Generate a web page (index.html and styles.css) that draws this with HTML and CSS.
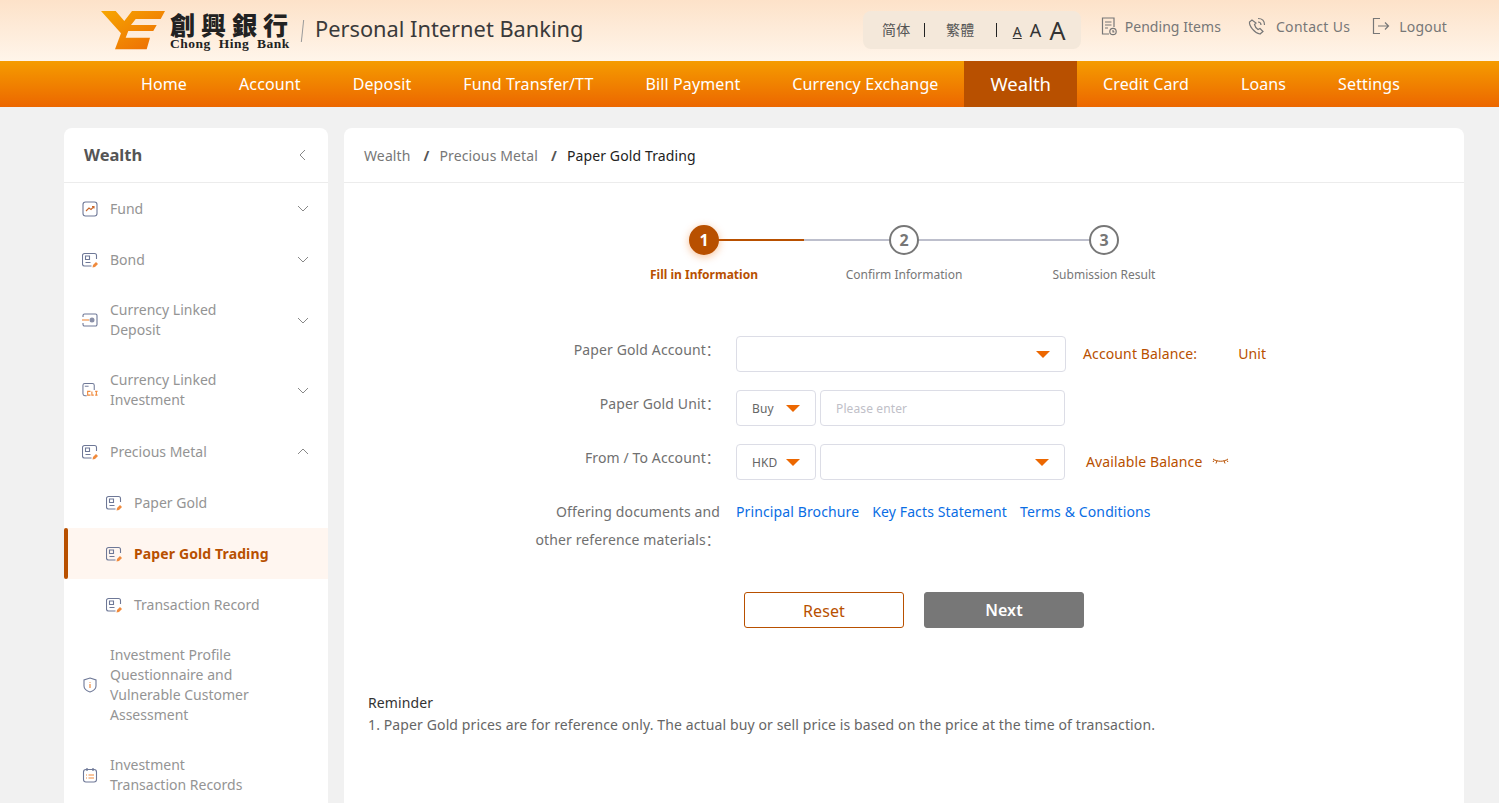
FILE: index.html
```html
<!doctype html>
<html>
<head>
    <meta charset="utf-8">
    <title>Personal Internet Banking</title>
    <link rel="stylesheet" href="styles.css">
</head>
<body>

<svg class="defs" width="0" height="0">
    <symbol id="i-doc" viewBox="0 0 16 16">
        <path d="M14.500 7V3.500a2 2 0 0 0-2-2h-10a2 2 0 0 0-2 2v8.500a2 2 0 0 0 2 2h7" fill="none" stroke="#6e7897" stroke-width="1.1"/>
        <path d="M3.500 4h4v3.500h-4zM3.500 10.500h5" fill="none" stroke="#6e7897" stroke-width="1.1"/>
        <path d="M10.500 15.500l.5-2.500 3-3 2 2-3 3z" fill="#f08a3c"/>
    </symbol>
</svg>

<div class="top">
    <div class="logo">
        <svg class="logo-mark" width="66" height="40" viewBox="0 0 66 40">
            <defs>
                <linearGradient id="lg" x1="0" y1="0" x2="1" y2="1">
                    <stop offset="0" stop-color="#f7a600"/>
                    <stop offset="1" stop-color="#ec6a05"/>
                </linearGradient>
            </defs>
            <path d="M1 0h14.700l8.600 10L32 0h33l-4.300 8h-25L31 14h25.700l-3.400 6h-25l-2.600 6.700H50l-3.300 11.600H15l6-16z" fill="url(#lg)"/>
        </svg>
        <div class="logo-name">
            <b>創興銀行</b>
            <span>Chong Hing Bank</span>
        </div>
        <i class="logo-line"></i>
        <div class="logo-title">Personal Internet Banking</div>
    </div>
    <div class="tools">
        <div class="lang">
            <span class="lang-item">简体</span>
            <span class="lang-item">繁體</span>
            <span class="size size-s">A</span>
            <span class="size size-m">A</span>
            <span class="size size-l">A</span>
        </div>
        <a class="tool tool-a">
            <svg width="16" height="19" viewBox="0 0 16 19" fill="none" stroke="#777" stroke-width="1.2"><path d="M8 17H1.500V1h11.500v9"/><path d="M4 5h6.500M4 8h6.500M4 11h3"/><circle cx="12" cy="14.500" r="3.200"/><path d="M12 13v1.800h1.400"/></svg>
            Pending Items
        </a>
        <a class="tool tool-b">
            <svg width="18" height="18" viewBox="0 0 18 18" fill="none" stroke="#777" stroke-width="1.2"><path d="M4 3L1.500 5c-.5 4 5 11 10.500 12l3-2.500-3-3-2 1c-1.500-1-3-3-3.500-5l1.500-1.500z"/><path d="M10 5c2 0 3 1 3 3M10 1.500c4 0 6.500 2.500 6.500 6.500"/></svg>
            Contact Us
        </a>
        <a class="tool tool-c">
            <svg width="18" height="18" viewBox="0 0 18 18" fill="none" stroke="#777" stroke-width="1.2"><path d="M8 1.500H1.500v15H8"/><path d="M6 9h10.500M13 5.500L16.500 9 13 12.500"/></svg>
            Logout
        </a>
    </div>
</div>

<div class="nav">
    <a>Home</a>
    <a>Account</a>
    <a>Deposit</a>
    <a>Fund Transfer/TT</a>
    <a>Bill Payment</a>
    <a>Currency Exchange</a>
    <a class="on">Wealth</a>
    <a>Credit Card</a>
    <a>Loans</a>
    <a>Settings</a>
</div>

<div class="page">
    <div class="side">
        <div class="side-head">
            <span>Wealth</span>
            <svg width="8" height="12" viewBox="0 0 8 12" fill="none" stroke="#888" stroke-width="1"><path d="M7 1L2 6l5 5"/></svg>
        </div>
        <div class="item">
            <svg class="ico" width="16" height="16" viewBox="0 0 16 16" fill="none"><rect x="1" y="1" width="14" height="14" rx="2.500" stroke="#6e7897" stroke-width="1.1"/><path d="M4 10l3-3 2 1.500L12 5.500M10 5.500h2v2" stroke="#c9662a" stroke-width="1.1"/></svg>
            <span class="txt">Fund</span>
            <svg class="arr" width="12" height="7" viewBox="0 0 12 7" fill="none" stroke="#888"><path d="M1 1l5 5 5-5"/></svg>
        </div>
        <div class="item">
            <svg class="ico" width="16" height="16"><use href="#i-doc"/></svg>
            <span class="txt">Bond</span>
            <svg class="arr" width="12" height="7" viewBox="0 0 12 7" fill="none" stroke="#888"><path d="M1 1l5 5 5-5"/></svg>
        </div>
        <div class="item">
            <svg class="ico" width="16" height="16" viewBox="0 0 16 16" fill="none"><path d="M1 5V3.500a1.500 1.500 0 0 1 1.500-1.500h11A1.500 1.500 0 0 1 15 3.500v9a1.500 1.500 0 0 1-1.500 1.500h-11A1.500 1.500 0 0 1 1 12.500V11" stroke="#6e7897" stroke-width="1.1"/><path d="M0 8h7" stroke="#f08a3c" stroke-width="1.1"/><circle cx="10" cy="8" r="2.500" fill="#8a90a8"/></svg>
            <span class="txt">Currency Linked<br>Deposit</span>
            <svg class="arr" width="12" height="7" viewBox="0 0 12 7" fill="none" stroke="#888"><path d="M1 1l5 5 5-5"/></svg>
        </div>
        <div class="item">
            <svg class="ico" width="16" height="16" viewBox="0 0 17 16" fill="none"><path d="M5 14H3a2 2 0 0 1-2-2V3a2 2 0 0 1 2-2h8a2 2 0 0 1 2 2v5" stroke="#6e7897" stroke-width="1.1"/><path d="M3 4h4" stroke="#6e7897"/><path d="M9 9.500H6v4h3M10.500 9.500v4h2M14 9.500h2.500M15.250 9.500v4M14 13.500h2.500" stroke="#f08a3c" stroke-width="1.200"/></svg>
            <span class="txt">Currency Linked<br>Investment</span>
            <svg class="arr" width="12" height="7" viewBox="0 0 12 7" fill="none" stroke="#888"><path d="M1 1l5 5 5-5"/></svg>
        </div>
        <div class="item metal">
            <svg class="ico" width="16" height="16"><use href="#i-doc"/></svg>
            <span class="txt">Precious Metal</span>
            <svg class="arr" width="12" height="7" viewBox="0 0 12 7" fill="none" stroke="#888"><path d="M1 6l5-5 5 5"/></svg>
        </div>
        <div class="item sub">
            <svg class="ico" width="16" height="16"><use href="#i-doc"/></svg>
            <span class="txt">Paper Gold</span>
        </div>
        <div class="item sub cur">
            <svg class="ico" width="16" height="16"><use href="#i-doc"/></svg>
            <span class="txt">Paper Gold Trading</span>
        </div>
        <div class="item sub">
            <svg class="ico" width="16" height="16"><use href="#i-doc"/></svg>
            <span class="txt">Transaction Record</span>
        </div>
        <div class="item">
            <svg class="ico" width="16" height="16" viewBox="0 0 16 16" fill="none"><path d="M8 1l6 2v6c0 3-3 5-6 6-3-1-6-3-6-6V3z" stroke="#6e7897" stroke-width="1.1"/><path d="M8 5v.8M8 7v4" stroke="#f08a3c" stroke-width="1.200"/></svg>
            <span class="txt">Investment Profile<br>Questionnaire and<br>Vulnerable Customer<br>Assessment</span>
        </div>
        <div class="item">
            <svg class="ico" width="16" height="16" viewBox="0 0 16 16" fill="none"><rect x="1.500" y="2.500" width="13" height="12.500" rx="2.500" stroke="#6e7897" stroke-width="1.1"/><path d="M5 1v3M11 1v3" stroke="#6e7897" stroke-width="1.300"/><path d="M4 8h1M4 11h1M6.500 8H12M6.500 11H12" stroke="#f08a3c" stroke-width="1.100"/></svg>
            <span class="txt">Investment<br>Transaction Records</span>
        </div>
    </div>

    <div class="main">
        <div class="crumb">
            <span>Wealth</span><i>/</i><span>Precious Metal</span><i>/</i><span class="now">Paper Gold Trading</span>
        </div>

        <div class="steps">
            <div class="step on"><b>1</b><span>Fill in Information</span></div>
            <div class="step"><b>2</b><span>Confirm Information</span></div>
            <div class="step"><b>3</b><span>Submission Result</span></div>
        </div>

        <div class="form">
            <div class="row">
                <label>Paper Gold Account：</label>
                <div class="box wide"><em class="tri"></em></div>
                <div class="note note-a"><span>Account Balance:</span><span class="unit">Unit</span></div>
            </div>
            <div class="row">
                <label>Paper Gold Unit：</label>
                <div class="box short">Buy<em class="tri"></em></div>
                <div class="box long ph">Please enter</div>
            </div>
            <div class="row">
                <label>From / To Account：</label>
                <div class="box short">HKD<em class="tri"></em></div>
                <div class="box long"><em class="tri"></em></div>
                <div class="note note-b">
                    <span>Available Balance</span>
                    <svg width="17" height="9" viewBox="0 0 17 9" fill="none" stroke="#b85000"><path d="M1 2c4 3 11 3 15 0M5 3.500L4 6.500M12 3.500l1 3M2 3.500L1 5M15 3.500L16 5"/></svg>
                </div>
            </div>
            <div class="row row-docs">
                <label>Offering documents and<br>other reference materials：</label>
                <div class="links">
                    <a>Principal Brochure</a>
                    <a>Key Facts Statement</a>
                    <a>Terms &amp; Conditions</a>
                </div>
            </div>
        </div>

        <div class="btns">
            <a class="btn reset">Reset</a>
            <a class="btn next">Next</a>
        </div>

        <div class="remind">
            <p class="remind-t">Reminder</p>
            <p>1. Paper Gold prices are for reference only. The actual buy or sell price is based on the price at the time of transaction.</p>
        </div>
    </div>
</div>

</body>
</html>
```

FILE: styles.css
```css
*{margin: 0; padding: 0; box-sizing: border-box;}
html,body{width: 100%; height: 100%; overflow: hidden;}
body{background-color: #f1f1f1; font-family: "Noto Sans", "Noto Sans CJK SC", sans-serif; font-size: 14px; letter-spacing: .12px; color: #333;}
.defs{position: absolute;}

.top{height: 61px; padding: 0 52px 0 100px; display: flex; justify-content: space-between; background: linear-gradient(180deg, #fde2c9 0%, #fff5ea 100%);}
.logo{display: flex; align-items: center; letter-spacing: 0;}
.logo-mark{display: block; margin-top: 1px;}
.logo-name{margin: 0 0 0 4px; width: 122px; color: #222;}
.logo-name b{display: block; font-family: "Noto Sans CJK TC", sans-serif; font-weight: 900; font-size: 25px; line-height: 25px; letter-spacing: 6px; white-space: nowrap;}
.logo-name span{display: block; font-family: "Liberation Serif", serif; font-weight: bold; font-size: 13.500px; line-height: 13px; letter-spacing: .5px; word-spacing: 4px; white-space: nowrap;}
.logo-line{display: block; width: 1px; height: 22px; margin: 0 12px 0 10px; background: #999; transform: skewX(-6deg);}
.logo-title{font-size: 21.800px; color: #3a3a3a; white-space: nowrap; margin-top: -5px;}
.tools{display: flex; align-items: flex-start; padding-top: 11px;}
.lang{display: flex; align-items: center; width: 218px; height: 38px; background: #f4e8da; border-radius: 8px;}
.lang-item{width: 72px; text-align: center; font-size: 14px; line-height: 14px; color: #555; border-right: 1px solid #222;}
.lang-item:first-child{width: 62px; padding-left: 6px;}
.size{color: #333; line-height: 1; margin-right: 8px;}
.size-s{font-size: 14px; text-decoration: underline; margin: 3px 8px 0 16px;}
.size-m{font-size: 18px;}
.size-l{font-size: 25px;}
.tool{display: flex; align-items: center; height: 30px; gap: 8px; color: #777; white-space: nowrap;}
.tool-a{margin-left: 20px; letter-spacing: .05px;}
.tool-b{margin-left: 27px; gap: 10px; letter-spacing: .3px;}
.tool-c{margin-left: 22px; gap: 9px; letter-spacing: .2px;}

.nav{height: 46px; padding-left: 115px; display: flex; background: linear-gradient(180deg, #f59c00 0%, #ec6700 100%);}
.nav a{padding: 0 26px; line-height: 46px; font-size: 16px; color: #fff; white-space: nowrap;}
.nav a.on{font-size: 18.500px; letter-spacing: 0; background: #b85000;}

.page{display: flex; align-items: flex-start; gap: 16px; padding: 21px 35px 0 64px;}
.side{width: 264px; flex: none; background: #fff; border-radius: 8px 8px 0 0;}
.side-head{height: 55px; padding: 0 22px 0 20px; display: flex; align-items: center; justify-content: space-between; border-bottom: 1px solid #ececec; font-size: 16.500px; letter-spacing: 0; font-weight: bold; color: #555;}
.side-head span{margin-top: -2px;}
.item{min-height: 51px; padding: 15px 19px 15px 18px; display: flex; align-items: center; position: relative; letter-spacing: 0; color: #949494;}
.item .txt{flex: 1; margin-left: 12px; line-height: 20px;}
.item .arr{flex: none;}
.ico{flex: none;}
.metal{margin-top: 1px;}
.sub{padding-left: 42px;}
.cur{background: #fff6f0; color: #b85000; font-weight: bold; letter-spacing: .12px;}
.cur:before{content: ""; position: absolute; left: 0; top: 0; bottom: 0; width: 4px; border-radius: 2px; background: #b85000;}

.main{flex: 1; height: 800px; background: #fff; border-radius: 8px 8px 0 0;}
.crumb{height: 55px; padding-left: 20px; display: flex; align-items: center; border-bottom: 1px solid #ececec; color: #777;}
.crumb i{margin: 0 10px 0 13px; font-style: normal; font-weight: bold; color: #555;}
.crumb .now{color: #222;}

.steps{display: flex; justify-content: center; margin-top: 42px;}
.step{width: 200px; position: relative; display: flex; flex-direction: column; align-items: center; font-size: 12px; letter-spacing: 0; color: #777;}
.step:before{content: ""; position: absolute; left: 50%; top: 14px; width: 200px; height: 2px; background: #bdbfcc;}
.step:last-child:before{display: none;}
.step.on:before{background: linear-gradient(90deg, #b85000 50%, #bdbfcc 50%);}
.step b{position: relative; width: 30px; height: 30px; border: 2px solid #777; border-radius: 50%; background: #fff; text-align: center; line-height: 26px; font-size: 16px; color: #777;}
.step.on b{border-color: #b85000; background: #b85000; color: #fff; box-shadow: 0 2px 8px rgba(236,103,0,.4);}
.step span{margin-top: 11px; line-height: 18px;}
.step.on span{color: #b85000; font-weight: bold;}

.form{margin-top: 52px;}
.row{display: flex; align-items: center; height: 36px; margin-bottom: 18px;}
.row label{width: 376px; flex: none; align-self: flex-start; margin-right: 16px; text-align: right; color: #707070; line-height: 28px;}
.box{height: 36px; border: 1px solid #dcdde6; border-radius: 4px; background: #fff; display: flex; align-items: center; justify-content: space-between; padding: 0 15px; font-size: 12px; color: #666;}
.wide{width: 330px;}
.short{width: 80px; margin-right: 4px;}
.long{width: 245px;}
.ph{color: #c0c0c8;}
.tri{width: 0; height: 0; margin-left: auto; border-style: solid; border-width: 7px 7px 0; border-color: #ec6700 transparent transparent;}
.note{display: flex; align-items: center; margin-top: -2px; color: #b85000;}
.note-a{margin-left: 17px;}
.unit{margin-left: 41px;}
.note-b{margin-left: 21px;}
.note-b svg{margin-left: 10px;}
.row-docs{align-items: flex-start; height: 56px; margin-bottom: 0;}
.links{display: flex; gap: 13px; line-height: 28px; color: #0a6de4;}

.btns{display: flex; justify-content: center; gap: 20px; margin: 38px 0 0 20px;}
.btn{width: 160px; height: 36px; border-radius: 3px; text-align: center; line-height: 36px; font-size: 16px;}
.reset{border: 1px solid #b85000; color: #b85000; background: #fff;}
.next{border: 1px solid #777; background: #777; color: #fff; font-weight: 600; line-height: 35px;}

.remind{margin-top: 64px; padding-left: 24px; line-height: 22px; color: #666;}
.remind-t{color: #333;}
```
